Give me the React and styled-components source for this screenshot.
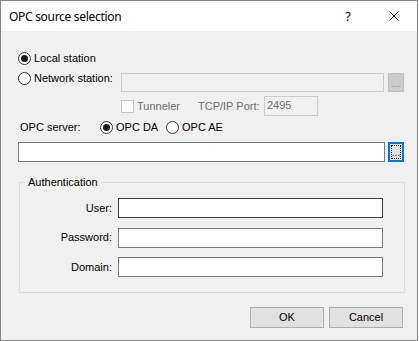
import React from "react";
import styled, { createGlobalStyle } from "styled-components";

const GlobalStyle = createGlobalStyle`
  html, body {
    margin: 0;
    padding: 0;
    background: #ffffff;
  }
  * {
    box-sizing: border-box;
  }
`;

const Window = styled.div`
  width: 418px;
  height: 341px;
  border: 1px solid #858585;
  display: flex;
  flex-direction: column;
  background: #f0f0f0;
  font-family: "Liberation Sans", Arial, sans-serif;
  font-size: 11px;
  color: #000;
`;

const TitleBar = styled.div`
  height: 30px;
  background: #ffffff;
  display: flex;
  align-items: center;
`;

const Title = styled.div`
  flex: 1;
  padding-left: 8px;
  font-family: "Noto Sans", "Open Sans", sans-serif;
  font-size: 12px;
  letter-spacing: -0.3px;
  line-height: 30px;
  padding-top: 1px;
`;

const CaptionButton = styled.div`
  width: 46px;
  height: 30px;
  display: flex;
  align-items: center;
  justify-content: center;
  font-family: "Noto Sans", sans-serif;
  font-size: 13px;
`;

const Client = styled.div`
  flex: 1;
  display: flex;
  flex-direction: column;
  padding-left: 17px;
`;

const Row = styled.div`
  display: flex;
  align-items: ${(p) => p.$align || "center"};
  height: ${(p) => p.$h}px;
  margin-top: ${(p) => p.$mt}px;
  padding-left: ${(p) => p.$pl || 0}px;
`;

const Option = styled.label`
  display: flex;
  align-items: center;
  width: ${(p) => (p.$w ? `${p.$w}px` : "auto")};
  flex-shrink: 0;
  gap: 3px;
  line-height: 13px;
  color: ${(p) => (p.$disabled ? "#6d6d6d" : "#000")};
`;

const Radio = styled.span`
  width: 13px;
  height: 13px;
  border: 1px solid #333333;
  border-radius: 50%;
  background: #ffffff;
  display: flex;
  align-items: center;
  justify-content: center;
  flex-shrink: 0;

  &::after {
    content: "";
    width: 7px;
    height: 7px;
    border-radius: 50%;
    background: ${(p) => (p.$checked ? "#1a1a1a" : "transparent")};
  }
`;

const Check = styled.span`
  width: 13px;
  height: 13px;
  border: 1px solid #c3c3c3;
  background: #fcfcfc;
  flex-shrink: 0;
`;

const Label = styled.span`
  width: ${(p) => (p.$w ? `${p.$w}px` : "auto")};
  flex-shrink: 0;
  line-height: 13px;
  padding-left: ${(p) => p.$pl || 0}px;
  color: ${(p) => (p.$disabled ? "#6d6d6d" : "#000")};
  text-align: ${(p) => (p.$right ? "right" : "left")};
`;

const TextBox = styled.div`
  width: ${(p) => (p.$w ? `${p.$w}px` : "auto")};
  height: ${(p) => p.$h || 20}px;
  margin-top: ${(p) => p.$mt || 0}px;
  border: 1px solid ${(p) => (p.$disabled ? "#cccccc" : p.$hover ? "#3f3f3f" : "#7a7a7a")};
  background: ${(p) => (p.$disabled ? "#f0f0f0" : "#ffffff")};
  color: #6d6d6d;
  line-height: 16px;
  padding-left: 2px;
  flex-shrink: 0;
`;

const BrowseButton = styled.div`
  width: 16px;
  height: ${(p) => p.$h}px;
  margin-top: ${(p) => p.$mt || 0}px;
  margin-left: ${(p) => p.$ml}px;
  flex-shrink: 0;
  display: flex;
  align-items: flex-end;
  justify-content: center;
  font-size: 10px;
  line-height: 10px;
  padding-bottom: 2px;
  border: ${(p) => (p.$focused ? "2px solid #0078d7" : "1px solid #bfbfbf")};
  background: ${(p) => (p.$focused ? "#e1e1e1" : "#cccccc")};
  color: ${(p) => (p.$focused ? "#3a1a6a" : "#838383")};
  position: relative;
`;

const FocusRect = styled.span`
  position: absolute;
  inset: 1px;
  border: 1px dotted #000;
`;

const Group = styled.div`
  position: relative;
  margin-top: 20px;
  margin-left: 1px;
  width: 386px;
  border: 1px solid #dcdcdc;
  padding: 15px 21px 15px 0;
  display: grid;
  grid-template-columns: 1fr 265px;
  column-gap: 6px;
  row-gap: 9.5px;
  align-items: center;
`;

const GroupCaption = styled.span`
  position: absolute;
  top: -7px;
  left: 6px;
  padding: 0 2px;
  background: #f0f0f0;
  line-height: 13px;
`;

const ButtonRow = styled.div`
  display: flex;
  justify-content: flex-end;
  gap: 5px;
  margin-top: 14px;
  margin-right: 14px;
`;

const Button = styled.div`
  width: 74px;
  height: 21px;
  border: 1px solid #adadad;
  background: #e1e1e1;
  display: flex;
  align-items: center;
  justify-content: center;
  line-height: 13px;
`;

function CloseIcon() {
  return (
    <svg width="10" height="10" viewBox="0 0 10 10">
      <path d="M0.5 0.5 L9.5 9.5 M9.5 0.5 L0.5 9.5" stroke="#000" strokeWidth="1" />
    </svg>
  );
}

export default function App() {
  return (
    <>
      <GlobalStyle />
      <Window>
        <TitleBar>
          <Title>OPC source selection</Title>
          <CaptionButton>?</CaptionButton>
          <CaptionButton>
            <CloseIcon />
          </CaptionButton>
        </TitleBar>
        <Client>
          <Row $h={19} $mt={18}>
            <Option>
              <Radio $checked />
              Local station
            </Option>
          </Row>
          <Row $h={20} $mt={4} $align="flex-start">
            <Option $w={103}>
              <Radio />
              Network station:
            </Option>
            <TextBox $w={263} $h={19} $mt={1} $disabled />
            <BrowseButton $h={19} $mt={1} $ml={4}>...</BrowseButton>
          </Row>
          <Row $h={20} $mt={4} $pl={103}>
            <Option $w={77} $disabled>
              <Check />
              Tunneler
            </Option>
            <Label $w={66} $disabled>TCP/IP Port:</Label>
            <TextBox $w={54} $h={20} $disabled>2495</TextBox>
          </Row>
          <Row $h={13} $mt={5}>
            <Label $w={82} $pl={2}>OPC server:</Label>
            <Option $w={66}>
              <Radio $checked />
              OPC DA
            </Option>
            <Option>
              <Radio />
              OPC AE
            </Option>
          </Row>
          <Row $h={20} $mt={8}>
            <TextBox $w={367} $h={20} />
            <BrowseButton $h={20} $ml={3} $focused>
              <FocusRect />
              ...
            </BrowseButton>
          </Row>
          <Group>
            <GroupCaption>Authentication</GroupCaption>
            <Label $right>User:</Label>
            <TextBox $h={20} $hover />
            <Label $right>Password:</Label>
            <TextBox $h={20} />
            <Label $right>Domain:</Label>
            <TextBox $h={20} />
          </Group>
          <ButtonRow>
            <Button>OK</Button>
            <Button>Cancel</Button>
          </ButtonRow>
        </Client>
      </Window>
    </>
  );
}
